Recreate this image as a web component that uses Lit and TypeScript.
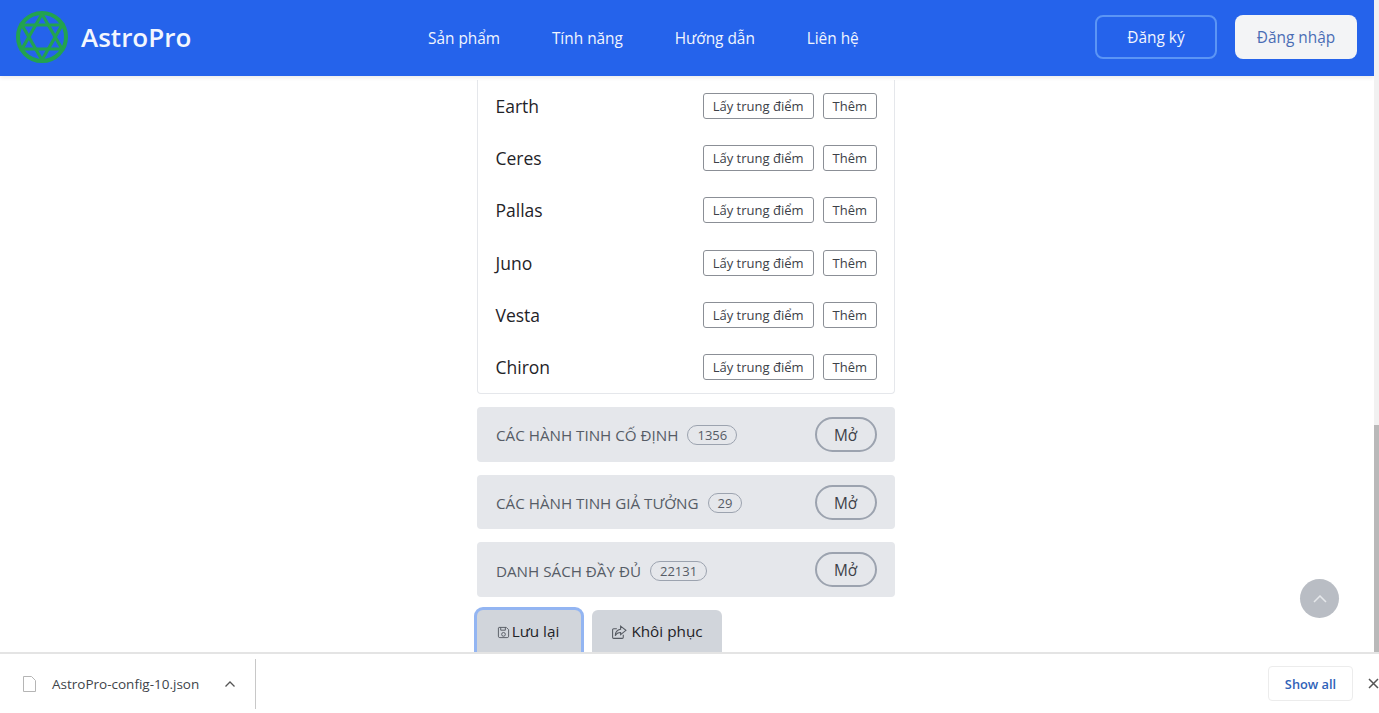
import { LitElement, html, css, svg } from "lit";
import { customElement } from "lit/decorators.js";

const ROWS = ["Earth", "Ceres", "Pallas", "Juno", "Vesta", "Chiron"];
const GROUPS = [
  ["CÁC HÀNH TINH CỐ ĐỊNH", "1356"],
  ["CÁC HÀNH TINH GIẢ TƯỞNG", "29"],
  ["DANH SÁCH ĐẦY ĐỦ", "22131"],
];

const logo = svg`<svg class="logo" viewBox="0 0 52 52" fill="none" stroke="#22a34f" stroke-width="3.2">
  <circle cx="26" cy="26" r="24" stroke-width="4"/>
  <path d="M26 3 L46 38 H6 Z"/><path d="M26 49 L46 14 H6 Z"/>
</svg>`;

@customElement("app-root")
export class AppRoot extends LitElement {
  static styles = css`
    :host { display: block; height: 713px; overflow: hidden; font-family: "Open Sans", sans-serif; background: #fff; }
    .page { display: flex; flex-direction: column; height: 713px; }
    .view { flex: 1; min-height: 0; display: flex; }
    .content { flex: 1; min-width: 0; display: flex; flex-direction: column; overflow: hidden; }
    .scrollbar { width: 5px; background: #f1f1f1; display: flex; flex-direction: column; justify-content: flex-end; }
    .thumb { height: 227px; background: #b9b9b9; }
    header { height: 76px; flex: none; box-sizing: border-box; background: #2563eb; display: flex; align-items: center; padding: 0 17px 2px 16px; color: #fff; box-shadow: 0 2px 4px rgba(0,0,0,.08); position: relative; z-index: 2; }
    .brand { display: flex; align-items: center; gap: 13px; font-size: 26px; font-weight: 600; color: #f3f6fe; width: 412px; }
    .logo { width: 52px; height: 52px; display: block; }
    nav { display: flex; gap: 51.8px; font-size: 15.4px; color: #f1f5fe; padding-top: 2px; }
    .auth { display: flex; margin-left: auto; gap: 18px; }
    .auth div { height: 44px; box-sizing: border-box; display: flex; align-items: center; justify-content: center; border-radius: 8px; font-size: 15.4px; width: 122px; }
    .signup { border: 2px solid #5b95f5; color: #f1f5fe; }
    .signin { background: #f3f4f6; color: #4a6db5; }
    main { width: 418px; margin-left: 477px; padding-top: 3.5px; }
    .card { box-sizing: border-box; height: 314px; border: 1px solid #e5e7eb; border-top: 0; border-radius: 0 0 4px 4px; padding: 0 17px 0 18px; }
    .row { height: 52.33px; display: flex; align-items: center; justify-content: space-between; font-size: 17.5px; color: #1f2328; }
    .name-cell { position: relative; left: -0.5px; }
    .actions { display: flex; gap: 9px; }
    .mini { height: 26px; box-sizing: border-box; display: flex; align-items: center; padding: 0 9px; border: 1px solid #8b8f96; border-radius: 3px; font-size: 13px; color: #3d4148; }
    .group { height: 54.7px; margin-top: 13.5px; background: #e5e7eb; border-radius: 4px; display: flex; align-items: center; padding: 0 18px 0 19px; font-size: 15.2px; color: #565c66; }
    .group + .group { margin-top: 13px; }
    .label { padding-top: 2px; }
    .badge { margin-left: 9px; margin-top: 2px; height: 20px; box-sizing: border-box; display: flex; align-items: center; padding: 0 9px; border: 1px solid #9ca3af; border-radius: 10px; font-size: 13px; color: #565c66; }
    .open { margin-left: auto; width: 62px; height: 35px; box-sizing: border-box; padding: 2px 1px 0 0; border: 2px solid #9ca3af; border-radius: 18px; display: flex; align-items: center; justify-content: center; font-size: 15.4px; color: #3d4148; }
    .buttons { display: flex; gap: 11px; margin-top: 13px; align-items: flex-start; }
    .btn { height: 48px; box-sizing: border-box; display: flex; align-items: flex-start; padding-top: 11px; justify-content: center; gap: 2px; background: #d1d5db; border-radius: 6px; font-size: 15.3px; color: #1f2328; line-height: 20px; }
    .btn svg { width: 13px; height: 13px; margin-top: 5px; flex: none; }
    .save { width: 104px; box-shadow: 0 0 0 3px #93b5f2; padding-right: 2px; }
    .restore { width: 130px; gap: 4px; }
    .restore svg { width: 16px; height: 15px; margin-top: 4px; }
    .totop { position: absolute; left: 1300px; top: 579px; width: 39px; height: 39px; border-radius: 50%; background: #b9bdc4; display: flex; align-items: center; justify-content: center; }
    .totop svg { width: 14px; height: 8px; }
    .downloads { height: 61px; flex: none; box-sizing: border-box; border-top: 2px solid #e4e4e4; background: #fff; display: flex; align-items: center; position: relative; z-index: 3; }
    .file { width: 13px; height: 16px; margin-left: 23px; }
    .name { margin-left: 16px; font-size: 13.5px; color: #40444a; }
    .chev { margin-left: 26px; width: 10px; height: 6px; }
    .sep { width: 1px; height: 50px; margin-left: 20px; background: #c8c8c8; }
    .all { margin-left: auto; width: 85px; height: 35px; box-sizing: border-box; border: 1px solid #ececec; border-radius: 4px; display: flex; align-items: center; justify-content: center; font-size: 12.8px; font-weight: 600; color: #2f62b8; }
    .close { margin: 0 0 0 15px; width: 11px; height: 11px; }
  `;

  render() {
    return html`<div class="page">
      <div class="view">
        <div class="content">
          <header>
            <div class="brand">${logo}<span>AstroPro</span></div>
            <nav><span>Sản phẩm</span><span>Tính năng</span><span>Hướng dẫn</span><span>Liên hệ</span></nav>
            <div class="auth"><div class="signup">Đăng ký</div><div class="signin">Đăng nhập</div></div>
          </header>
          <main>
            <div class="card">
              ${ROWS.map((r) => html`<div class="row"><span class="name-cell">${r}</span><div class="actions"><div class="mini">Lấy trung điểm</div><div class="mini">Thêm</div></div></div>`)}
            </div>
            ${GROUPS.map(([t, n]) => html`<div class="group"><span class="label">${t}</span><span class="badge">${n}</span><span class="open">Mở</span></div>`)}
            <div class="buttons">
              <div class="btn save">
                <svg viewBox="0 0 14 14" fill="none" stroke="#555a62" stroke-width="1"><path d="M2 1.500h8l2.500 2.500v7a1.500 1.500 0 0 1-1.500 1.500H3A1.500 1.500 0 0 1 1.500 11V2z"/><path d="M4 1.500v3h5v-3"/><circle cx="7" cy="9" r="2"/></svg>
                <span>Lưu lại</span>
              </div>
              <div class="btn restore">
                <svg viewBox="0 0 15 14" fill="none" stroke="#555a62" stroke-width="1"><path d="M11.500 9v2.500a1 1 0 0 1-1 1h-8a1 1 0 0 1-1-1v-7a1 1 0 0 1 1-1h3"/><path d="M9 1l5 4-5 4V7C6.500 7 5 8 4 10c0-3.500 2-5.500 5-6z"/></svg>
                <span>Khôi phục</span>
              </div>
            </div>
          </main>
        </div>
        <div class="scrollbar"><div class="thumb"></div></div>
      </div>
      <div class="totop"><svg viewBox="0 0 14 8" fill="none" stroke="#e6e8eb" stroke-width="1.500"><path d="M1 7l6-6 6 6"/></svg></div>
      <div class="downloads">
        <svg class="file" viewBox="0 0 13 16" fill="#fff" stroke="#b5b5b5"><path d="M.5.500h8l4 4v11H.5z"/></svg>
        <span class="name">AstroPro-config-10.json</span>
        <svg class="chev" viewBox="0 0 10 6" fill="none" stroke="#555" stroke-width="1.300"><path d="M.5 5.500 5 1l4.500 4.500"/></svg>
        <div class="sep"></div>
        <div class="all">Show all</div>
        <svg class="close" viewBox="0 0 11 11" stroke="#555" stroke-width="1.500"><path d="M1 1l9 9M10 1l-9 9"/></svg>
      </div>
    </div>`;
  }
}
